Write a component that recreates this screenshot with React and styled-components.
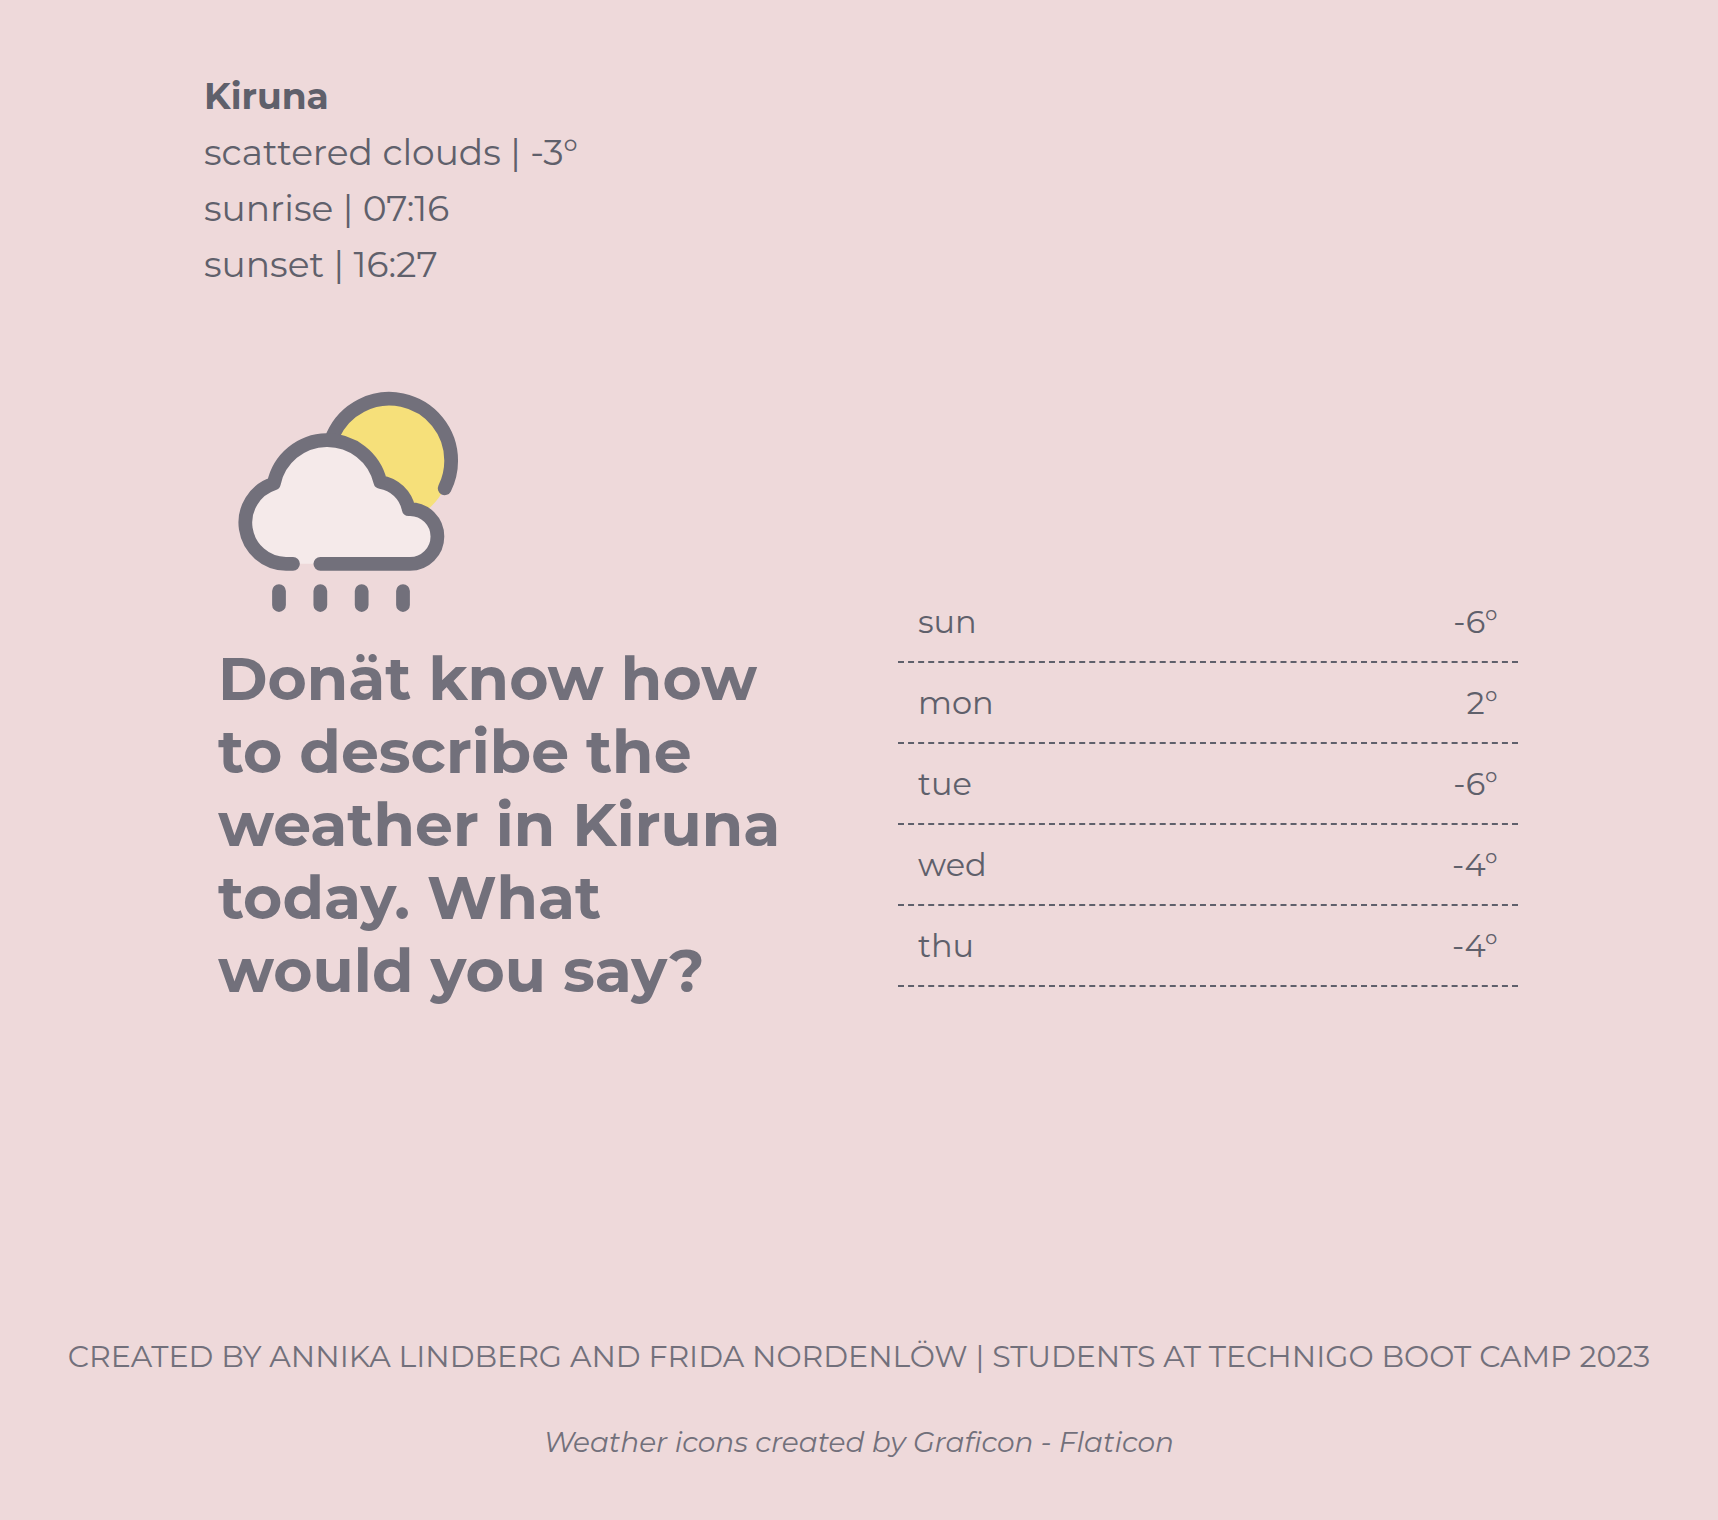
import React from 'react';
import styled, { createGlobalStyle } from 'styled-components';

const GlobalStyle = createGlobalStyle`
  *, *::before, *::after {
    box-sizing: border-box;
  }

  body {
    margin: 0;
    background: #eed9da;
    color: #5f606b;
    font-family: Montserrat, Inter, "Open Sans", sans-serif;
    font-weight: 400;
  }
`;

const Page = styled.div`
  display: flex;
  flex-direction: column;
  min-height: 100vh;
  padding: 68px 0 58px;
`;

const Summary = styled.header`
  width: 100%;
  max-width: 1318px;
  margin: 0 auto;
  padding: 0 4px;
`;

const City = styled.h1`
  margin: 0;
  font-size: 36px;
  font-weight: 700;
  line-height: 56px;
`;

const SummaryLine = styled.p`
  margin: 0;
  font-size: 36px;
  line-height: 56px;
`;

const Main = styled.main`
  display: grid;
  grid-template-columns: 1fr 1fr;
  column-gap: 78px;
  align-items: end;
  width: 100%;
  max-width: 1318px;
  margin: 100px auto 0;
`;

const Advice = styled.section`
  padding: 0 20px 0 18px;
`;

const WeatherIcon = styled.svg`
  display: block;
  width: 220px;
  height: 220px;
  margin: 0 0 30px 20px;
  overflow: visible;
`;

const Message = styled.h2`
  margin: 0;
  color: #72707b;
  font-size: 60px;
  font-weight: 700;
  line-height: 73px;
`;

const Forecast = styled.table`
  display: block;
  width: 100%;
  margin-bottom: 20px;
  font-size: 32px;
  line-height: 39px;

  tbody {
    display: block;
  }
`;

const Day = styled.tr`
  display: flex;
  justify-content: space-between;
  padding: 20px;
  border-bottom: 2px dashed #5f606b;
`;

const DayName = styled.th`
  padding: 0;
  font-weight: 400;
`;

const Temperature = styled.td`
  padding: 0;
`;

const Footer = styled.footer`
  display: flex;
  flex-direction: column;
  gap: 45px;
  margin-top: auto;
  color: #72707b;
  line-height: 40px;
  text-align: center;
`;

const Authors = styled.p`
  margin: 0;
  font-size: 30px;
  text-transform: uppercase;
`;

const Credits = styled.p`
  margin: 0;
  font-size: 28px;
  font-style: italic;
`;

const forecast = [
  { day: 'sun', temp: -6 },
  { day: 'mon', temp: 2 },
  { day: 'tue', temp: -6 },
  { day: 'wed', temp: -4 },
  { day: 'thu', temp: -4 },
];

function RainCloud() {
  return (
    <WeatherIcon viewBox="54 66 660 660" role="img" aria-label="Sun behind a rain cloud">
      <path
        d="M338.500 196A185.500 185.500 0 0 1 693.500 272Q692 352 631 412L480 500Z"
        fill="#f6e07a"
      />
      <path
        d="M338.500 196.500A185.500 185.500 0 0 1 693.500 272Q693.500 316 674 355"
        fill="none"
        stroke="#72707b"
        strokeWidth="41.250"
        strokeLinecap="round"
      />
      <path
        d="M198 581.500A123.500 123.500 0 0 1 161.500 340.500A163.700 163.700 0 0 1 481 336A103 103 0 0 1 566 417H570A82.250 82.250 0 0 1 570 581.500Z"
        fill="#f5eaea"
      />
      <g
        fill="none"
        stroke="#72707b"
        strokeWidth="41.250"
        strokeLinecap="round"
        strokeLinejoin="round"
      >
        <path d="M219 581.500H198A123.500 123.500 0 0 1 161.500 340.500A163.700 163.700 0 0 1 481 336A103 103 0 0 1 566 417H570A82.250 82.250 0 0 1 570 581.500H301" />
        <path d="M177 663V705M301 663V705M425 663V705M549 663V705" />
      </g>
    </WeatherIcon>
  );
}

export default function App() {
  return (
    <>
      <GlobalStyle />
      <Page>
        <Summary>
          <City>Kiruna</City>
          <SummaryLine>scattered clouds | -3°</SummaryLine>
          <SummaryLine>sunrise | 07:16</SummaryLine>
          <SummaryLine>sunset | 16:27</SummaryLine>
        </Summary>
        <Main>
          <Advice>
            <RainCloud />
            <Message>
              Donät know how to describe the weather in Kiruna today. What would you say?
            </Message>
          </Advice>
          <Forecast>
            <tbody>
              {forecast.map(({ day, temp }) => (
                <Day key={day}>
                  <DayName scope="row">{day}</DayName>
                  <Temperature>{temp}°</Temperature>
                </Day>
              ))}
            </tbody>
          </Forecast>
        </Main>
        <Footer>
          <Authors>
            Created by Annika Lindberg and Frida Nordenlöw | Students at Technigo Boot Camp 2023
          </Authors>
          <Credits>Weather icons created by Graficon - Flaticon</Credits>
        </Footer>
      </Page>
    </>
  );
}
